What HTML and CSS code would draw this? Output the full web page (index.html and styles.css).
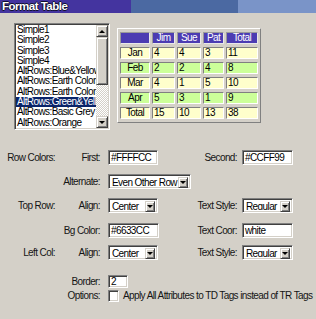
FILE: index.html
```html
<!DOCTYPE html>
<html>
<head>
<meta charset="utf-8">
<link rel="stylesheet" href="styles.css">
</head>
<body>
<div class="titlebar">Format Table</div>
<div class="top">
  <div class="listbox">
    <div class="items">
      <div class="item">Simple1</div>
      <div class="item">Simple2</div>
      <div class="item">Simple3</div>
      <div class="item">Simple4</div>
      <div class="item">AltRows:Blue&amp;Yellow</div>
      <div class="item">AltRows:Earth Colors</div>
      <div class="item">AltRows:Earth Colors</div>
      <div class="item sel">AltRows:Green&amp;Yellow</div>
      <div class="item">AltRows:Basic Grey</div>
      <div class="item">AltRows:Orange</div>
    </div>
    <div class="vscroll">
      <div class="sbtn"><span class="tri-up"></span></div>
      <div class="thumb"></div>
      <div class="track"></div>
      <div class="sbtn"><span class="tri-down"></span></div>
    </div>
  </div>
  <div class="preview">
    <table>
      <tr class="head">
        <th class="c1"></th><th class="c2">Jim</th><th class="c3">Sue</th><th class="c4">Pat</th><th class="c5">Total</th>
      </tr>
      <tr class="ra"><td class="lbl">Jan</td><td>4</td><td>4</td><td>3</td><td>11</td></tr>
      <tr class="rb"><td class="lbl">Feb</td><td>2</td><td>2</td><td>4</td><td>8</td></tr>
      <tr class="ra"><td class="lbl">Mar</td><td>4</td><td>1</td><td>5</td><td>10</td></tr>
      <tr class="rb"><td class="lbl">Apr</td><td>5</td><td>3</td><td>1</td><td>9</td></tr>
      <tr class="ra"><td class="lbl">Total</td><td>15</td><td>10</td><td>13</td><td>38</td></tr>
    </table>
  </div>
</div>

<div class="form">
  <div class="row r1">
    <span class="lab1">Row Colors:</span>
    <span class="lab2">First:</span>
    <div class="cell3"><span class="field w50">#FFFFCC</span></div>
    <span class="lab4">Second:</span>
    <div class="cell5"><span class="field w51">#CCFF99</span></div>
  </div>
  <div class="row r2">
    <span class="lab1"></span>
    <span class="lab2">Alternate:</span>
    <div class="cell3"><div class="select w83"><span class="val">Even Other Row</span><span class="dbtn"><span class="tri-down"></span></span></div></div>
  </div>
  <div class="row r3">
    <span class="lab1">Top Row:</span>
    <span class="lab2">Align:</span>
    <div class="cell3"><div class="select w50"><span class="val">Center</span><span class="dbtn"><span class="tri-down"></span></span></div></div>
    <span class="lab4">Text Style:</span>
    <div class="cell5"><div class="select w51"><span class="val">Regular</span><span class="dbtn"><span class="tri-down"></span></span></div></div>
  </div>
  <div class="row r4">
    <span class="lab1"></span>
    <span class="lab2">Bg Color:</span>
    <div class="cell3"><span class="field w51">#6633CC</span></div>
    <span class="lab4">Text Coor:</span>
    <div class="cell5"><span class="field w51">white</span></div>
  </div>
  <div class="row r5">
    <span class="lab1">Left Col:</span>
    <span class="lab2">Align:</span>
    <div class="cell3"><div class="select w50"><span class="val">Center</span><span class="dbtn"><span class="tri-down"></span></span></div></div>
    <span class="lab4">Text Style:</span>
    <div class="cell5"><div class="select w51"><span class="val">Regular</span><span class="dbtn"><span class="tri-down"></span></span></div></div>
  </div>
  <div class="row r6">
    <span class="lab1"></span>
    <span class="lab2">Border:</span>
    <div class="cell3"><span class="field w20 small">2</span></div>
  </div>
  <div class="row r7">
    <span class="lab1"></span>
    <span class="lab2">Options:</span>
    <div class="cell3 wide"><span class="check"></span><span class="opt">Apply All Attributes to TD Tags instead of TR Tags</span></div>
  </div>
</div>
</body>
</html>
```

FILE: styles.css
```css
* { box-sizing: border-box; }

body {
  margin: 0;
  width: 316px;
  height: 319px;
  overflow: hidden;
  background: #d4d0c8;
  font: 10px/1 "Liberation Sans", Arial, sans-serif;
  letter-spacing: -0.6px;
  color: #151515;
}

.titlebar {
  height: 13px;
  background: linear-gradient(to right, #44349f 0 131px, #4b69a2 131px 238px, #7a94c8 238px);
  color: #fff;
  font-weight: bold;
  font-size: 11.5px;
  line-height: 13px;
  padding-left: 2px;
  letter-spacing: -0.5px;
  text-shadow: 1px 0 0 #101030, -1px 0 0 #101030, 0 1px 0 #101030, 0 -1px 0 #101030;
}

.top {
  display: flex;
  align-items: flex-start;
  gap: 7px;
  padding: 10px 0 0 14px;
}

.listbox, .field, .select, .check {
  background: #fff;
  border: 1px solid;
  border-color: #808080 #fff #fff #808080;
  box-shadow: inset 1px 1px 0 #404040, inset -1px -1px 0 #d4d0c8;
}

.listbox {
  width: 96px;
  height: 107px;
  padding: 1px;
  display: flex;
  color: #000;
}

.items {
  flex: 1;
  min-width: 0;
  overflow: hidden;
}

.item {
  height: 10.3px;
  line-height: 10.3px;
  padding-left: 1px;
  white-space: nowrap;
}

.item.sel {
  background: #0a246a;
  color: #fff;
}

.vscroll {
  width: 12px;
  display: flex;
  flex-direction: column;
}

.sbtn, .thumb, .dbtn {
  background: #d4d0c8;
  border: 1px solid;
  border-color: #d4d0c8 #404040 #404040 #d4d0c8;
  box-shadow: inset 1px 1px 0 #fff, inset -1px -1px 0 #808080;
}

.sbtn {
  height: 12px;
  display: flex;
  align-items: center;
  justify-content: center;
}

.thumb { height: 48px; }

.track {
  flex: 1;
  background: repeating-conic-gradient(#fff 0 25%, #d4d0c8 0 50%) 0 0 / 2px 2px;
}

.tri-up {
  width: 0;
  height: 0;
  border-left: 3px solid transparent;
  border-right: 3px solid transparent;
  border-bottom: 3px solid #000;
}

.tri-down {
  width: 0;
  height: 0;
  border-left: 3px solid transparent;
  border-right: 3px solid transparent;
  border-top: 3px solid #000;
}

.preview {
  margin-top: 5px;
  border: 1px solid;
  border-color: #fff #808080 #808080 #fff;
}

.preview table {
  border-collapse: separate;
  border-spacing: 2px 3px;
  table-layout: fixed;
  width: 142px;
}

.preview th, .preview td {
  height: 12px;
  padding: 0 1px;
  border: 1px solid;
  border-color: #808080 #fff #fff #808080;
  line-height: 10px;
  white-space: nowrap;
  overflow: hidden;
  font-weight: normal;
  text-align: left;
  color: #000;
}

.preview th {
  background: #4c3cb2;
  color: #fff;
  text-align: center;
  border-color: #9a9a9a #e8e8e8 #e8e8e8 #9a9a9a;
}

.c1 { width: 30px; }
.c2 { width: 23px; }
.c3 { width: 24px; }
.c4 { width: 21px; }
.c5 { width: 32px; }

.ra td { background: #ffffcc; }
.rb td { background: #ccff99; }
.preview td.lbl { text-align: center; }

.form {
  margin-top: 20px;
}

.row {
  display: grid;
  grid-template-columns: 55px 45px 93px 44px 56px;
  height: 15px;
  align-items: center;
}

.r1 { margin-bottom: 9px; }
.r2 { margin-bottom: 9px; }
.r3 { margin-bottom: 10px; }
.r4 { margin-bottom: 7px; }
.r5 { margin-bottom: 15px; }
.r6 { margin-bottom: 2px; height: 13px; }
.r7 { height: 12px; }

.lab1, .lab2, .lab4 {
  text-align: right;
  white-space: nowrap;
}

.cell3 { padding-left: 8px; display: flex; align-items: center; }
.cell5 { padding-left: 5px; display: flex; align-items: center; }

.field {
  display: block;
  height: 15px;
  padding: 0 2px;
  line-height: 13px;
  color: #000;
  white-space: nowrap;
  overflow: hidden;
}

.field.small { height: 13px; line-height: 11px; }

.select {
  display: flex;
  height: 15px;
  padding: 2px;
  color: #000;
}

.select .val {
  flex: 1;
  line-height: 11px;
  padding-left: 1px;
  white-space: nowrap;
  overflow: hidden;
}

.dbtn {
  width: 10px;
  height: 11px;
  display: flex;
  align-items: center;
  justify-content: center;
}

.w20 { width: 20px; }
.w50 { width: 50px; }
.w51 { width: 51px; }
.w83 { width: 83px; }

.wide {
  grid-column: 3 / -1;
  white-space: nowrap;
}

.check {
  width: 11px;
  height: 12px;
  flex: none;
}

.opt {
  margin-left: 4px;
}
```
